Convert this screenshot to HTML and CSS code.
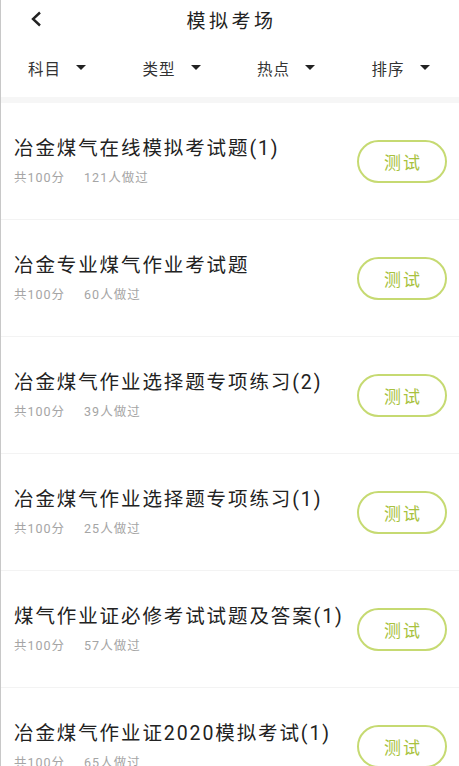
FILE: index.html
```html
<!DOCTYPE html>
<html lang="zh-CN">
    <head>
        <meta charset="UTF-8">
        <meta name="viewport" content="width=device-width, initial-scale=1.0">
        <title>模拟考场</title>
        <link rel="stylesheet" href="styles.css">
    </head>

    <body>
        <div class="page">
            <div class="top-bar">
                <span class="back">
                    <svg width="12" height="16" viewBox="0 0 12 16"><path d="M10 1.5 L3 8 L10 14.5" fill="none" stroke="#222" stroke-width="2.4"/></svg>
                </span>
                <h1 class="page-title">模拟考场</h1>
            </div>

            <div class="filter-bar">
                <div class="filter">科目<span class="caret"></span></div>
                <div class="filter">类型<span class="caret"></span></div>
                <div class="filter">热点<span class="caret"></span></div>
                <div class="filter">排序<span class="caret"></span></div>
            </div>

            <div class="exam-list">
                <div class="exam-item">
                    <div class="exam-info">
                        <div class="exam-title">冶金煤气在线模拟考试题(1)</div>
                        <div class="exam-meta"><span>共100分</span><span>121人做过</span></div>
                    </div>
                    <button class="test-btn">测试</button>
                </div>
                <div class="exam-item">
                    <div class="exam-info">
                        <div class="exam-title">冶金专业煤气作业考试题</div>
                        <div class="exam-meta"><span>共100分</span><span>60人做过</span></div>
                    </div>
                    <button class="test-btn">测试</button>
                </div>
                <div class="exam-item">
                    <div class="exam-info">
                        <div class="exam-title">冶金煤气作业选择题专项练习(2)</div>
                        <div class="exam-meta"><span>共100分</span><span>39人做过</span></div>
                    </div>
                    <button class="test-btn">测试</button>
                </div>
                <div class="exam-item">
                    <div class="exam-info">
                        <div class="exam-title">冶金煤气作业选择题专项练习(1)</div>
                        <div class="exam-meta"><span>共100分</span><span>25人做过</span></div>
                    </div>
                    <button class="test-btn">测试</button>
                </div>
                <div class="exam-item">
                    <div class="exam-info">
                        <div class="exam-title">煤气作业证必修考试试题及答案(1)</div>
                        <div class="exam-meta"><span>共100分</span><span>57人做过</span></div>
                    </div>
                    <button class="test-btn">测试</button>
                </div>
                <div class="exam-item">
                    <div class="exam-info">
                        <div class="exam-title">冶金煤气作业证2020模拟考试(1)</div>
                        <div class="exam-meta"><span>共100分</span><span>65人做过</span></div>
                    </div>
                    <button class="test-btn">测试</button>
                </div>
            </div>
        </div>
    </body>
</html>
```

FILE: styles.css
```css
html, body {
    margin: 0;
    height: 100%;
    overflow: hidden;
}

body {
    font-family: Roboto, "Noto Sans CJK SC", sans-serif;
    background: #fff;
    color: #222;
}

.page {
    border-left: 1px solid #c8c8c8;
    min-height: 100%;
}

.top-bar {
    position: relative;
    height: 38px;
    display: flex;
    align-items: center;
    justify-content: center;
}

.back {
    position: absolute;
    left: 29px;
    top: 11px;
    line-height: 0;
}

.page-title {
    margin: 0;
    font-size: 19px;
    font-weight: normal;
    letter-spacing: 3.5px;
    margin-left: 3px;
    color: #222;
}

.filter-bar {
    display: grid;
    grid-template-columns: repeat(4, 1fr);
    height: 59px;
    align-items: center;
    border-bottom: 6px solid #f6f6f6;
}

.filter {
    padding-left: 27px;
    font-size: 15.5px;
    letter-spacing: 1px;
    color: #333;
    display: flex;
    align-items: center;
}

.caret {
    width: 0;
    height: 0;
    margin-left: 15px;
    border-left: 5px solid transparent;
    border-right: 5px solid transparent;
    border-top: 5px solid #222;
}

.exam-item {
    height: 116px;
    border-bottom: 1px solid #f3f3f3;
    display: flex;
    align-items: center;
    justify-content: space-between;
    padding: 0 12px 0 13px;
}

.exam-info {
    display: flex;
    flex-direction: column;
    gap: 8px;
}

.exam-title {
    font-size: 19.5px;
    line-height: 26px;
    letter-spacing: 1.9px;
    color: #222;
}

.exam-meta {
    font-size: 12.5px;
    line-height: 16px;
    color: #a5a5a5;
    letter-spacing: 1px;
    display: flex;
    gap: 19px;
}

.test-btn {
    width: 90px;
    height: 43px;
    border: 2px solid #c6da72;
    border-radius: 22px;
    background: #fff;
    color: #a8c23e;
    font-family: "Noto Sans CJK SC", sans-serif;
    font-size: 17px;
    letter-spacing: 2px;
    padding: 0 0 0 2px;
    flex-shrink: 0;
}
```
